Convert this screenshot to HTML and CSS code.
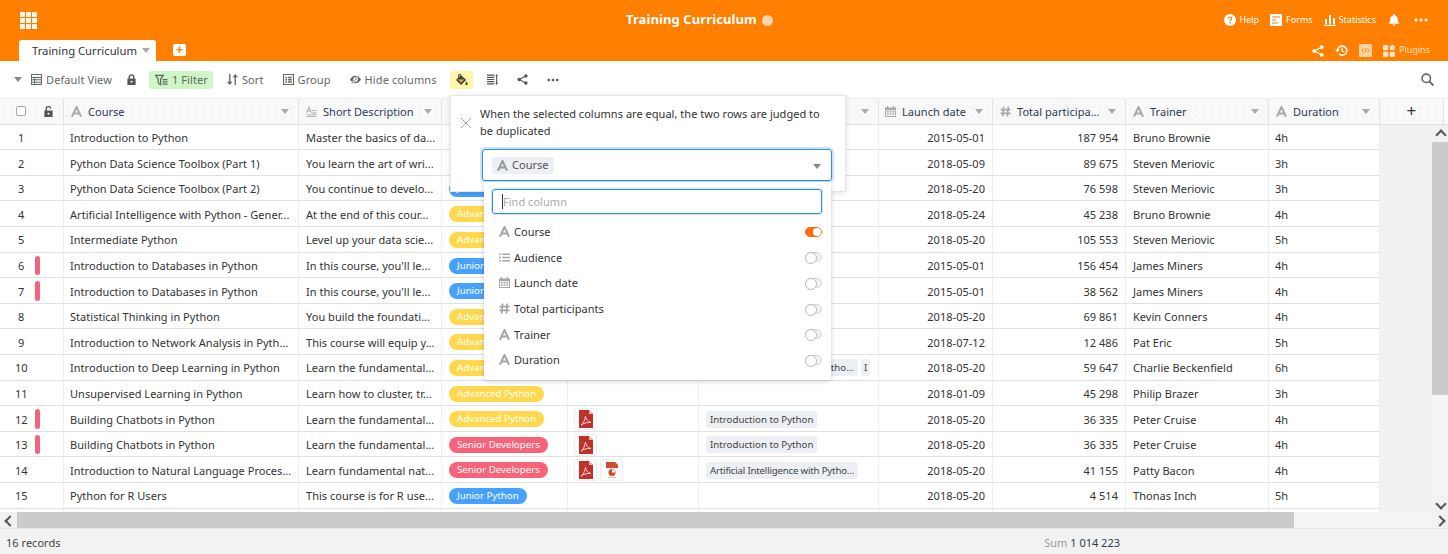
FILE: index.html
```html
<!DOCTYPE html>
<html lang="en">
<head>
<meta charset="utf-8">
<title>Training Curriculum</title>
<link rel="stylesheet" href="styles.css">
</head>
<body>
<svg class="sprite" aria-hidden="true">
  <symbol id="i-a" viewBox="0 0 12 12"><path d="M1 11.700 6 1.200l5 10.500M3 8.200h6" fill="none" stroke="currentColor" stroke-width="2.200"/></symbol>
  <symbol id="i-long" viewBox="0 0 12 12"><path d="M.8 7.500 3.300 1l2.500 6.500M1.700 5.500h3.200" fill="none" stroke="currentColor" stroke-width="1.100"/><path d="M6.500 5h5M6.500 7.500h5M.5 9.500h11M.5 11.500h11" stroke="currentColor" stroke-width="1"/></symbol>
  <symbol id="i-list" viewBox="0 0 12 12"><path d="M0 2.500h2M0 6h2M0 9.500h2M3.500 2.500H12M3.500 6H12M3.500 9.500H12" stroke="currentColor" stroke-width="1.500"/></symbol>
  <symbol id="i-cal" viewBox="0 0 12 12"><path fill="currentColor" d="M2 0h1.500v1.500h5V0H10v1.500h2V12H0V1.500h2zM1 4.500v6.500h10V4.500z"/><path fill="currentColor" d="M2 5.500h2v1.500H2zM5 5.500h2v1.500H5zM8 5.500h2v1.500H8zM2 8h2v1.500H2zM5 8h2v1.500H5zM8 8h2v1.500H8z"/></symbol>
  <symbol id="i-hash" viewBox="0 0 12 12"><path d="M4 .5 3 11.500M9 .5l-1 11M.5 4h11M.5 8h11" fill="none" stroke="currentColor" stroke-width="1.900"/></symbol>
  <symbol id="i-table" viewBox="0 0 12 12"><path d="M.6.6h10.800v10.800H.6zM.6 3.800h10.800M.6 6.400h10.800M.6 9h10.800M4 3.800v7.600" fill="none" stroke="currentColor" stroke-width="1.100"/></symbol>
  <symbol id="i-lock" viewBox="0 0 12 12"><path d="M3.500 5.500V3.500a2.500 2.500 0 0 1 5 0v2" fill="none" stroke="currentColor" stroke-width="1.500"/><path fill="currentColor" d="M1.500 5h9v7h-9z"/><circle cx="6" cy="8.500" r="1.100" fill="#fff"/></symbol>
  <symbol id="i-unlock" viewBox="0 0 12 12"><path d="M3.500 5.500V3.500a2.500 2.500 0 0 1 5-.5" fill="none" stroke="currentColor" stroke-width="1.500"/><path fill="currentColor" d="M1.500 5h9v7h-9z"/><circle cx="6" cy="8.500" r="1.100" fill="#fff"/></symbol>
  <symbol id="i-filter" viewBox="0 0 14 12"><path d="M.5 1h8.500L6 5v6L3.500 9.500V5z" fill="none" stroke="currentColor" stroke-width="1.300"/><path d="M8 5.500h5.500M8 8h5.500M8 10.500h5.500" stroke="currentColor" stroke-width="1.300"/></symbol>
  <symbol id="i-sort" viewBox="0 0 12 12"><path fill="currentColor" d="M2.300 0h1.500v8.500H6L3 12 0 8.500h2.300zM8.200 12h1.500V3.500H12L9 0 6 3.500h2.200z"/></symbol>
  <symbol id="i-group" viewBox="0 0 12 12"><path d="M.6.6h10.800v10.800H.6z" fill="none" stroke="currentColor" stroke-width="1.200"/><path d="M2.500 3h2v1.500h-2zM5.500 3h4v1.500h-4zM2.500 5.500h2V7h-2zM5.500 5.500h4V7h-4zM2.500 8h2v1.500h-2zM5.500 8h4v1.500h-4z" fill="currentColor"/></symbol>
  <symbol id="i-eye" viewBox="0 0 12 10"><path fill="currentColor" d="M6 1C3.500 1 1.300 2.800 0 5c1.300 2.200 3.500 4 6 4s4.700-1.800 6-4c-1.300-2.200-3.500-4-6-4zm0 6.500a2.500 2.500 0 1 1 0-5 2.500 2.500 0 0 1 0 5z"/><path d="M10 .5 2 9.500" stroke="#fff" stroke-width="2.200"/><path d="M10 .5 2 9.500" stroke="currentColor" stroke-width="1"/></symbol>
  <symbol id="i-fill" viewBox="0 0 14 13"><path fill="currentColor" d="M6.500 1 12 6.500 6.500 12 1 6.500z"/><path d="M6.500 1 4.500 0M4 .5v4" stroke="currentColor" stroke-width="1.200" fill="none"/><path fill="#ffb23e" d="M3 6h7l-3.500 3.500z" opacity=".9"/><path fill="currentColor" d="M12.500 8c.8 1.200 1.300 2 1.300 2.700a1.300 1.300 0 0 1-2.600 0c0-.7.500-1.500 1.300-2.700z"/></symbol>
  <symbol id="i-rowh" viewBox="0 0 12 12"><path d="M0 1.200h8M0 3.600h8M0 6h8M0 8.400h8M0 10.800h8" stroke="currentColor" stroke-width="1.300"/><path d="M10.500 1.500v9" stroke="currentColor" stroke-width="1.200"/><path d="M10.500 0 12 2.500H9zM10.500 12 9 9.500h3z" fill="currentColor"/></symbol>
  <symbol id="i-share" viewBox="0 0 12 12"><path d="M9.500 2.200 2.500 6l7 3.800" fill="none" stroke="currentColor" stroke-width="1.100"/><circle cx="9.700" cy="2.200" r="1.900" fill="currentColor"/><circle cx="2.300" cy="6" r="1.900" fill="currentColor"/><circle cx="9.700" cy="9.800" r="1.900" fill="currentColor"/></symbol>
  <symbol id="i-more" viewBox="0 0 14 4"><circle cx="2" cy="2" r="1.500" fill="currentColor"/><circle cx="7" cy="2" r="1.500" fill="currentColor"/><circle cx="12" cy="2" r="1.500" fill="currentColor"/></symbol>
  <symbol id="i-search" viewBox="0 0 13 13"><circle cx="5.300" cy="5.300" r="4.200" fill="none" stroke="currentColor" stroke-width="1.600"/><path d="m8.500 8.500 4 4" stroke="currentColor" stroke-width="1.900"/></symbol>
  <symbol id="i-help" viewBox="0 0 12 12"><circle cx="6" cy="6" r="6" fill="#fff"/><path d="M4.300 4.600C4.400 3.600 5 3 6 3s1.800.6 1.800 1.500C7.800 5.700 6 5.700 6 7.100" fill="none" stroke="#ff8000" stroke-width="1.200"/><path d="M5.300 8h1.400v1.400H5.300z" fill="#ff8000"/></symbol>
  <symbol id="i-forms" viewBox="0 0 12 12"><path fill="#fff" d="M0 0h12v12H0z"/><path d="M2 3h8M2 6h4M2 9h6" stroke="#ff8000" stroke-width="1.200"/></symbol>
  <symbol id="i-stats" viewBox="0 0 12 12"><path fill="#fff" d="M1 5h2v5.500H1zM5 1h2v9.500H5zM9 4h2v6.500H9zM0 11h12v1H0z"/></symbol>
  <symbol id="i-bell" viewBox="0 0 12 13"><path fill="#fff" d="M6 0c.6 0 1 .4 1 1v.6c2 .4 3 2 3 4 0 2.400.6 3.400 2 4.900H0c1.400-1.500 2-2.500 2-4.900 0-2 1-3.600 3-4V1c0-.6.400-1 1-1zM4.500 11.300h3a1.500 1.500 0 0 1-3 0z"/></symbol>
  <symbol id="i-history" viewBox="0 0 14 13"><path d="M2.800 6.500a4.900 4.900 0 1 1 1.500 3.600" fill="none" stroke="#fff" stroke-width="1.700"/><path d="M0 5.500h5.200L2.700 8.500z" fill="#fff"/><path d="M7.700 3.500V7l2.300 1.200" fill="none" stroke="#fff" stroke-width="1.300"/></symbol>
  <symbol id="i-code" viewBox="0 0 13 13"><rect width="13" height="13" rx="1.500" fill="#ffd2a3"/><path d="M4.500 4.500 2.700 6.500l1.800 2M8.500 4.500l1.800 2-1.800 2M7 4.300 6 8.700" fill="none" stroke="#ff8000" stroke-width=".9"/></symbol>
  <symbol id="i-plugins" viewBox="0 0 12 12"><rect width="5.300" height="5.300" rx=".8" fill="#ffe3c4"/><rect x="6.700" width="5.300" height="5.300" rx="2.600" fill="#ffe3c4"/><rect y="6.700" width="5.300" height="5.300" rx=".8" fill="#ffe3c4"/><rect x="6.700" y="6.700" width="5.300" height="5.300" rx=".8" fill="#ffe3c4"/></symbol>
  <symbol id="i-pdf" viewBox="0 0 16 18"><path fill="#c0312a" d="M1 0h10l4 4v14H1z"/><path fill="#f0b7b0" d="M11 0l4 4h-4z"/><path d="M3 15c2-1 4-5 4.500-9C7.500 9 10 12 13 12.500 10 12 6 13 3 15z" fill="none" stroke="#fbe4e0" stroke-width=".9"/></symbol>
  <symbol id="i-ppt" viewBox="0 0 14 17"><path fill="#fff" d="M0 0h14v17H0z"/><path fill="#d24a2e" d="M1 0h9l3 3v3H1z"/><circle cx="7" cy="10.500" r="3.500" fill="#d24a2e"/><path d="M7 10.500V7.500a3 3 0 0 1 3 3z" fill="#fff"/><path d="M3 15.500h8" stroke="#eeb9ac" stroke-width="1"/></symbol>
</svg>

<div class="app">
  <header class="top">
    <div class="top-row">
      <div class="logo"><i></i><i></i><i></i><i></i><i></i><i></i><i></i><i></i><i></i></div>
      <h1 class="title">Training Curriculum</h1>
      <span class="title-dot"></span>
      <nav class="top-links">
        <a class="top-link"><svg class="ic12"><use href="#i-help"/></svg>Help</a>
        <a class="top-link"><svg class="ic12"><use href="#i-forms"/></svg>Forms</a>
        <a class="top-link tight"><svg class="ic12"><use href="#i-stats"/></svg>Statistics</a>
        <svg class="ic12 bell"><use href="#i-bell"/></svg>
        <svg class="dots"><use href="#i-more"/></svg>
      </nav>
    </div>
    <div class="tab-row">
      <div class="tab">Training Curriculum<span class="caret"></span></div>
      <div class="add-tab">+</div>
      <nav class="tab-tools">
        <svg class="ic12 white"><use href="#i-share"/></svg>
        <svg class="ic13"><use href="#i-history"/></svg>
        <svg class="ic13"><use href="#i-code"/></svg>
        <a class="plugins"><svg class="ic12"><use href="#i-plugins"/></svg>Plugins</a>
      </nav>
    </div>
  </header>

  <div class="toolbar">
    <span class="caret view-caret"></span>
    <span class="tool"><svg class="ic11"><use href="#i-table"/></svg>Default View</span>
    <svg class="ic11 solo"><use href="#i-lock"/></svg>
    <span class="tool pill-green"><svg class="ic13w"><use href="#i-filter"/></svg>1 Filter</span>
    <span class="tool"><svg class="ic11"><use href="#i-sort"/></svg>Sort</span>
    <span class="tool wide"><svg class="ic11"><use href="#i-group"/></svg>Group</span>
    <span class="tool wide"><svg class="ic11"><use href="#i-eye"/></svg>Hide columns</span>
    <span class="pill-yellow"><svg class="ic13w"><use href="#i-fill"/></svg></span>
    <svg class="ic11 solo"><use href="#i-rowh"/></svg>
    <svg class="ic11 solo wide"><use href="#i-share"/></svg>
    <svg class="more solo wide"><use href="#i-more"/></svg>
    <svg class="ic13 search"><use href="#i-search"/></svg>
  </div>

  <div class="grid">
    <div class="cols ghead">
      <div class="hc hc-index"><span class="check"></span><svg class="ic11"><use href="#i-unlock"/></svg></div>
      <div class="hc"><svg class="ic11 fi"><use href="#i-a"/></svg><b>Course</b><span class="caret"></span></div>
      <div class="hc"><svg class="ic11 fi"><use href="#i-long"/></svg><b>Short Description</b><span class="caret"></span></div>
      <div class="hc hidden-head"><span class="caret"></span></div>
      <div class="hc hidden-head"><span class="caret"></span></div>
      <div class="hc hidden-head"><span class="caret"></span></div>
      <div class="hc hc-date"><svg class="ic11 fi"><use href="#i-cal"/></svg><b>Launch date</b><span class="caret"></span></div>
      <div class="hc"><svg class="ic11 fi"><use href="#i-hash"/></svg><b>Total participa...</b><span class="caret"></span></div>
      <div class="hc"><svg class="ic11 fi"><use href="#i-a"/></svg><b>Trainer</b><span class="caret"></span></div>
      <div class="hc"><svg class="ic11 fi"><use href="#i-a"/></svg><b>Duration</b><span class="caret"></span></div>
      <div class="hc hc-add">+</div>
    </div>
    <div class="gbody">
      <div class="rows">
        <div class="cols row"><div class="c idx">1</div><div class="c">Introduction to Python</div><div class="c">Master the basics of da...</div><div class="c"></div><div class="c"></div><div class="c"></div><div class="c num">2015-05-01</div><div class="c num">187 954</div><div class="c">Bruno Brownie</div><div class="c">4h</div></div>
        <div class="cols row"><div class="c idx">2</div><div class="c">Python Data Science Toolbox (Part 1)</div><div class="c">You learn the art of wri...</div><div class="c"></div><div class="c"></div><div class="c"></div><div class="c num">2018-05-09</div><div class="c num">89 675</div><div class="c">Steven Meriovic</div><div class="c">3h</div></div>
        <div class="cols row"><div class="c idx">3</div><div class="c">Python Data Science Toolbox (Part 2)</div><div class="c">You continue to develo...</div><div class="c"><span class="tag jun tag-under">Junior</span></div><div class="c"></div><div class="c"></div><div class="c num">2018-05-20</div><div class="c num">76 598</div><div class="c">Steven Meriovic</div><div class="c">3h</div></div>
        <div class="cols row"><div class="c idx">4</div><div class="c">Artificial Intelligence with Python - Gener...</div><div class="c">At the end of this cour...</div><div class="c"><span class="tag adv">Advanced Python</span></div><div class="c"></div><div class="c"></div><div class="c num">2018-05-24</div><div class="c num">45 238</div><div class="c">Bruno Brownie</div><div class="c">4h</div></div>
        <div class="cols row"><div class="c idx">5</div><div class="c">Intermediate Python</div><div class="c">Level up your data scie...</div><div class="c"><span class="tag adv">Advanced Python</span></div><div class="c"></div><div class="c"></div><div class="c num">2018-05-20</div><div class="c num">105 553</div><div class="c">Steven Meriovic</div><div class="c">5h</div></div>
        <div class="cols row"><div class="c idx dup">6</div><div class="c">Introduction to Databases in Python</div><div class="c">In this course, you'll le...</div><div class="c"><span class="tag jun">Junior Python</span></div><div class="c"></div><div class="c"></div><div class="c num">2015-05-01</div><div class="c num">156 454</div><div class="c">James Miners</div><div class="c">4h</div></div>
        <div class="cols row"><div class="c idx dup">7</div><div class="c">Introduction to Databases in Python</div><div class="c">In this course, you'll le...</div><div class="c"><span class="tag jun">Junior Python</span></div><div class="c"></div><div class="c"></div><div class="c num">2015-05-01</div><div class="c num">38 562</div><div class="c">James Miners</div><div class="c">4h</div></div>
        <div class="cols row"><div class="c idx">8</div><div class="c">Statistical Thinking in Python</div><div class="c">You build the foundati...</div><div class="c"><span class="tag adv">Advanced Python</span></div><div class="c"></div><div class="c"></div><div class="c num">2018-05-20</div><div class="c num">69 861</div><div class="c">Kevin Conners</div><div class="c">4h</div></div>
        <div class="cols row"><div class="c idx">9</div><div class="c">Introduction to Network Analysis in Pyth...</div><div class="c">This course will equip y...</div><div class="c"><span class="tag adv">Advanced Python</span></div><div class="c"></div><div class="c"></div><div class="c num">2018-07-12</div><div class="c num">12 486</div><div class="c">Pat Eric</div><div class="c">5h</div></div>
        <div class="cols row"><div class="c idx">10</div><div class="c">Introduction to Deep Learning in Python</div><div class="c">Learn the fundamental...</div><div class="c"><span class="tag adv">Advanced Python</span></div><div class="c"></div><div class="c chips"><span class="chip chip-long">Deep Learning with Pytho...</span><span class="chip chip-stub">I</span></div><div class="c num">2018-05-20</div><div class="c num">59 647</div><div class="c">Charlie Beckenfield</div><div class="c">6h</div></div>
        <div class="cols row"><div class="c idx">11</div><div class="c">Unsupervised Learning in Python</div><div class="c">Learn how to cluster, tr...</div><div class="c"><span class="tag adv">Advanced Python</span></div><div class="c"></div><div class="c"></div><div class="c num">2018-01-09</div><div class="c num">45 298</div><div class="c">Philip Brazer</div><div class="c">3h</div></div>
        <div class="cols row"><div class="c idx dup">12</div><div class="c">Building Chatbots in Python</div><div class="c">Learn the fundamental...</div><div class="c"><span class="tag adv">Advanced Python</span></div><div class="c files"><span class="file"><svg class="pdf"><use href="#i-pdf"/></svg></span></div><div class="c chips"><span class="chip">Introduction to Python</span></div><div class="c num">2018-05-20</div><div class="c num">36 335</div><div class="c">Peter Cruise</div><div class="c">4h</div></div>
        <div class="cols row"><div class="c idx dup">13</div><div class="c">Building Chatbots in Python</div><div class="c">Learn the fundamental...</div><div class="c"><span class="tag sen">Senior Developers</span></div><div class="c files"><span class="file"><svg class="pdf"><use href="#i-pdf"/></svg></span></div><div class="c chips"><span class="chip">Introduction to Python</span></div><div class="c num">2018-05-20</div><div class="c num">36 335</div><div class="c">Peter Cruise</div><div class="c">4h</div></div>
        <div class="cols row"><div class="c idx">14</div><div class="c">Introduction to Natural Language Proces...</div><div class="c">Learn fundamental nat...</div><div class="c"><span class="tag sen">Senior Developers</span></div><div class="c files"><span class="file"><svg class="pdf"><use href="#i-pdf"/></svg></span><span class="file"><svg class="ppt"><use href="#i-ppt"/></svg></span></div><div class="c chips"><span class="chip chip-fit">Artificial Intelligence with Pytho...</span></div><div class="c num">2018-05-20</div><div class="c num">41 155</div><div class="c">Patty Bacon</div><div class="c">4h</div></div>
        <div class="cols row"><div class="c idx">15</div><div class="c">Python for R Users</div><div class="c">This course is for R use...</div><div class="c"><span class="tag jun">Junior Python</span></div><div class="c"></div><div class="c"></div><div class="c num">2018-05-20</div><div class="c num">4 514</div><div class="c">Thonas Inch</div><div class="c">5h</div></div>
        <div class="cols row"><div class="c idx"></div><div class="c"></div><div class="c"></div><div class="c"></div><div class="c"></div><div class="c"></div><div class="c num"></div><div class="c num"></div><div class="c"></div><div class="c"></div></div>
      </div>
      <div class="vscroll"><span class="chev up"></span><span class="vthumb"></span><span class="vtrack"></span><span class="chev down"></span></div>
    </div>
  </div>

  <div class="hscroll"><span class="chev left"></span><span class="hthumb"></span><span class="htrack"></span><span class="chev right"></span></div>

  <footer class="cols foot">
    <div class="records">16 records</div>
    <div class="sum">Sum <strong>1 014 223</strong></div>
  </footer>

  <section class="dup-panel">
    <span class="close"></span>
    <p class="dup-text">When the selected columns are equal, the two rows are judged to be duplicated</p>
    <div class="select"><span class="sel-chip"><svg class="ic11"><use href="#i-a"/></svg>Course</span><span class="caret sel-caret"></span></div>
  </section>

  <section class="col-menu">
    <div class="find"><span class="cursor"></span>Find column</div>
    <div class="opt"><svg class="ic11"><use href="#i-a"/></svg><span>Course</span><i class="sw on"></i></div>
    <div class="opt"><svg class="ic11"><use href="#i-list"/></svg><span>Audience</span><i class="sw"></i></div>
    <div class="opt"><svg class="ic11"><use href="#i-cal"/></svg><span>Launch date</span><i class="sw"></i></div>
    <div class="opt"><svg class="ic11"><use href="#i-hash"/></svg><span>Total participants</span><i class="sw"></i></div>
    <div class="opt"><svg class="ic11"><use href="#i-a"/></svg><span>Trainer</span><i class="sw"></i></div>
    <div class="opt"><svg class="ic11"><use href="#i-a"/></svg><span>Duration</span><i class="sw"></i></div>
  </section>
</div>
</body>
</html>
```

FILE: styles.css
```css
* { box-sizing: border-box; }
html, body { margin: 0; padding: 0; }
body { font: 11px/1.2 "Noto Sans", "Open Sans", sans-serif; color: #333; background: #fff; letter-spacing: .03px; }
.sprite { position: absolute; width: 0; height: 0; }
.app { position: relative; width: 1448px; height: 554px; display: flex; flex-direction: column; overflow: hidden; }

.ic11 { width: 11px; height: 11px; flex: none; }
.ic12 { width: 12px; height: 12px; flex: none; }
.ic13 { width: 13px; height: 13px; flex: none; }
.ic13w { width: 13px; height: 12px; flex: none; }

.caret { width: 0; height: 0; flex: none; border: 4px solid transparent; border-top: 5px solid #a9a9a9; border-bottom: 0; }

/* top bar */
.top { height: 61px; flex: none; background: #ff8000; color: #fff; display: flex; flex-direction: column; }
.top-row { height: 40px; display: flex; align-items: center; padding-left: 20px; }
.logo { width: 17px; height: 17px; display: grid; grid-template-columns: repeat(3, 1fr); grid-template-rows: repeat(3, 1fr); gap: 1px; }
.logo i { background: #fff; opacity: .92; }
.title { margin: 0 0 0 589px; font-size: 13px; font-weight: 700; letter-spacing: .1px; width: 131px; white-space: nowrap; }
.title-dot { width: 11px; height: 11px; margin-left: 5px; border-radius: 50%; background: #ffd5aa; }
.top-links { margin-left: auto; margin-right: 20px; display: flex; align-items: center; gap: 11px; font-size: 9px; letter-spacing: 0; }
.top-link { display: flex; align-items: center; gap: 4px; }
.tight { gap: 3px; }
.bell { margin-left: 1px; }
.dots { width: 14px; height: 4px; margin-left: 3px; color: #fff; }
.tab-row { height: 21px; display: flex; padding-left: 19px; position: relative; }
.tab { width: 137px; height: 21px; background: #fff; color: #333; border-radius: 3px 3px 0 0; padding-left: 13px; display: flex; align-items: center; gap: 5px; font-size: 11.250px; white-space: nowrap; letter-spacing: 0; }
.add-tab { width: 13px; height: 12px; margin: 4px 0 0 17px; background: #fff; color: #ff8000; border-radius: 2px; font: 700 12px/12px "Liberation Sans", sans-serif; text-align: center; }
.tab-tools { margin-left: auto; margin-right: 18px; display: flex; align-items: center; gap: 11px; font-size: 9px; letter-spacing: 0; color: #ffe3c4; }
.white { color: #fff; }
.plugins { display: flex; align-items: center; gap: 4px; }

/* toolbar */
.toolbar { height: 37px; flex: none; display: flex; align-items: center; padding-left: 14px; gap: 14px; color: #666; letter-spacing: .1px; position: relative; }
.view-caret { margin-right: -5px; border-top-color: #888; }
.tool { display: flex; align-items: center; gap: 4px; white-space: nowrap; }
.solo { color: #555; }
.wide { margin-left: 5px; }
.pill-green { height: 18px; width: 64px; margin-left: -2px; padding-left: 6px; background: #cff5c8; border-radius: 3px; color: #5c6b5a; }
.pill-yellow { height: 18px; width: 23px; margin-left: -1px; background: #fff6a8; border-radius: 3px; display: flex; align-items: center; justify-content: center; color: #444; }
.more { width: 12px; height: 4px; }
.search { margin-left: auto; margin-right: 14px; color: #666; }

/* grid */
.cols { display: grid; grid-template-columns: 64px 235px 143px 126px 131px 180px 114px 133px 143px 111px 64px; }
.grid { flex: 1; min-height: 0; display: flex; flex-direction: column; }
.ghead { height: 26.600px; flex: none; border-top: 1px solid #eee; border-bottom: 1px solid #e1e1e1; }
.hc { background: repeating-conic-gradient(#f5f5f5 0 25%, #fcfcfc 0 50%) 0 0 / 2px 2px; border-right: 1px solid #e3e3e3; display: flex; align-items: center; padding: 0 9px 0 7px; min-width: 0; overflow: hidden; }
.hc b { font-weight: 400; color: #2e3a4e; margin-left: 6px; white-space: nowrap; }
.hc .caret { margin-left: auto; }
.hc .fi { color: #aaa; }
.hc-date { padding-left: 6px; }
.hc-index { padding: 0 0 0 16px; color: #555; }
.hc-index .ic11 { margin-left: 17px; }
.check { width: 10px; height: 10px; border: 1px solid #aaa; border-radius: 2px; background: #fff; }
.hc-add { justify-content: center; font-size: 17px; color: #333; padding: 0 0 1px; }

.gbody { flex: 1; min-height: 0; display: flex; }
.rows { flex: 1; min-width: 0; overflow: hidden; background: #f1f1f1; }
.row { height: 25.600px; }
.c { background: #fff; border-right: 1px solid #eee; border-bottom: 1px solid #e1e1e1; padding: 1.400px 7px 0; display: flex; align-items: center; white-space: nowrap; overflow: hidden; min-width: 0; color: #333; }
.c:nth-child(2), .c:nth-child(10) { padding-left: 6px; }
.num { justify-content: flex-end; }
.idx { position: relative; padding-left: 18px; }
.row:nth-child(n+10) .idx { padding-left: 15px; }
.dup::after { content: ""; position: absolute; left: 35px; top: 3px; bottom: 2px; width: 5px; border-radius: 3px; background: #f4647f; }
.tag { height: 16px; padding: 0 8px; border-radius: 8px; color: #fff; font-size: 9.700px; line-height: 16px; letter-spacing: 0; }
.tag-under { width: 78px; }
.adv { background: #ffd84d; }
.jun { background: #46a1fd; }
.sen { background: #f7647a; }
.chips { gap: 3px; }
.chip { height: 17px; line-height: 17px; padding: 0 4px; background: #eceff4; border-radius: 3px; font-size: 9.700px; letter-spacing: 0; color: #444; flex: none; }
.chip-fit { letter-spacing: -.2px; }
.chip-long { width: 152px; overflow: hidden; text-align: right; }
.chip-stub { width: 9px; padding: 0 0 0 3px; }
.files { gap: 3px; padding-left: 6px; }
.file { width: 23px; height: 22px; border: 1px solid #eee; border-radius: 2px; display: flex; align-items: center; justify-content: center; flex: none; }
.pdf { width: 16px; height: 18px; }
.ppt { width: 14px; height: 17px; }

/* scrollbars */
.vscroll { width: 16px; flex: none; display: flex; flex-direction: column; background: #f1f1f1; }
.vthumb { height: 253px; margin-top: 1px; background: #cbcbcb; flex: none; }
.vtrack { flex: 1; background: repeating-conic-gradient(#f1f1f1 0 25%, #fafafa 0 50%) 0 0 / 2px 2px; }
.chev { width: 16px; height: 16px; flex: none; position: relative; background: #f1f1f1; }
.chev::after { content: ""; position: absolute; left: 5px; top: 5px; width: 6px; height: 6px; border: 2px solid #555; border-width: 2px 0 0 2px; }
.up::after { transform: translateY(1px) rotate(45deg); }
.down::after { transform: translateY(-1px) rotate(225deg); }
.left::after { transform: translateX(1px) rotate(-45deg); }
.right::after { transform: translateX(-1px) rotate(135deg); }
.hscroll { height: 16px; flex: none; display: flex; background: #f1f1f1; }
.hthumb { width: 1277px; margin-left: 1px; background: #cbcbcb; }
.htrack { flex: 1; background: repeating-conic-gradient(#f1f1f1 0 25%, #fafafa 0 50%) 0 0 / 2px 2px; }

/* footer */
.foot { height: 26px; flex: none; background: #f2f2f2; border-top: 1px solid #e6e6e6; align-items: center; color: #444; padding-top: 2px; }
.records { grid-column: 1 / 8; padding-left: 6px; }
.sum { grid-column: 8; text-align: right; padding-right: 6px; color: #999; letter-spacing: 0; white-space: nowrap; }
.sum strong { font-weight: 400; color: #2e3a4e; }

/* duplicate popover */
.dup-panel { position: absolute; left: 450px; top: 95px; width: 396px; height: 97px; background: #fff; border: 1px solid #e6e6e6; box-shadow: 0 1px 6px rgba(0,0,0,.12); padding: 9px 14px 0 29px; z-index: 10; }
.close { position: absolute; left: 10px; top: 22px; width: 10px; height: 10px; background: linear-gradient(45deg, transparent 46%, #aaa 46%, #aaa 54%, transparent 54%), linear-gradient(-45deg, transparent 46%, #aaa 46%, #aaa 54%, transparent 54%); }
.dup-text { margin: 0; line-height: 17px; color: #333; }
.select { position: absolute; left: 31px; top: 53px; width: 350px; height: 32px; border: 1px solid #2d91e8; border-radius: 3px; box-shadow: 0 0 0 2px #cfe2f6; display: flex; align-items: center; padding: 0 10px 0 9px; }
.sel-chip { height: 17px; width: 62px; background: #eceff4; border-radius: 3px; display: flex; align-items: center; gap: 4px; padding-left: 5px; color: #555; }
.sel-chip .ic11 { color: #999; }
.sel-caret { margin-left: auto; margin-top: 3px; border-top-color: #888; border-width: 5px 4px 0; }

/* column menu */
.col-menu { position: absolute; left: 484px; top: 182px; width: 347px; height: 198px; background: #fff; border-radius: 0 0 3px 3px; box-shadow: 0 1px 5px rgba(0,0,0,.2); padding: 7px 9px 0 8px; z-index: 11; }
.find { position: relative; height: 25px; border: 1px solid #2d91e8; border-radius: 3px; box-shadow: 0 0 0 1px #cfe2f6; color: #aaa; display: flex; align-items: center; padding-left: 10px; margin-bottom: 5px; }
.cursor { position: absolute; left: 9px; top: 4px; width: 1px; height: 15px; background: #333; }
.opt { height: 25.600px; display: flex; align-items: center; gap: 4px; padding-left: 7px; color: #333; }
.opt .ic11 { color: #a5a5a5; }
.sw { margin-left: auto; width: 17px; height: 10px; border-radius: 5px; background: #f2f2f2; border: 1px solid #d5d5d5; position: relative; }
.sw::after { content: ""; position: absolute; left: -1px; top: -1px; width: 10px; height: 10px; border-radius: 50%; background: #fff; border: 1px solid #bbb; }
.sw.on { background: #f96e0a; border-color: #f96e0a; }
.sw.on::after { left: 7px; top: 0; width: 8px; height: 8px; border: 0; }
```
